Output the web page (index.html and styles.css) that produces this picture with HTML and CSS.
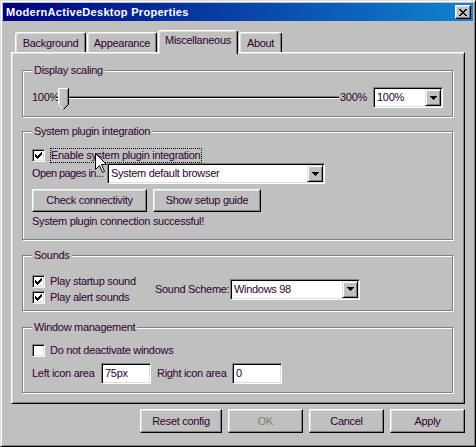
FILE: index.html
```html
<!DOCTYPE html>
<html>
<head>
<meta charset="utf-8">
<link rel="stylesheet" href="styles.css">
</head>
<body>
<div class="window">
  <div class="titlebar">
    <span class="title">ModernActiveDesktop Properties</span>
    <span class="close"><svg width="8" height="7" viewBox="0 0 8 7"><path d="M0 0h2v1H0zM6 0h2v1H6zM1 1h2v1H1zM5 1h2v1H5zM2 2h4v1H2zM3 3h2v1H3zM2 4h4v1H2zM1 5h2v1H1zM5 5h2v1H5zM0 6h2v1H0zM6 6h2v1H6z" fill="#000"/></svg></span>
  </div>
  <div class="tabs">
    <div class="tab t-bg">Background</div>
    <div class="tab t-ap">Appearance</div>
    <div class="tab active t-misc">Miscellaneous</div>
    <div class="tab t-about">About</div>
  </div>
  <div class="panel">
    <div class="group g1">
      <span class="legend">Display scaling</span>
      <div class="slider-row">
        <span class="w-100">100%</span>
        <div class="slider">
          <div class="track"></div>
          <svg class="thumb" width="11" height="22" viewBox="0 0 11 22">
            <path d="M0 0h11v16l-5 5.5L0 16z" fill="#c0c0c0"/>
            <path d="M0.5 16V0.5H10" fill="none" stroke="#fff"/>
            <path d="M1.5 16V1.5" fill="none" stroke="#dfdfdf"/>
            <path d="M10.5 0V16.5L5.5 21.5" fill="none" stroke="#000"/>
            <path d="M9.5 1.5V16L5.5 20" fill="none" stroke="#808080"/>
            <path d="M0.5 16.5L5 21" fill="none" stroke="#fff"/>
          </svg>
        </div>
        <span class="w-300">300%</span>
        <div class="combo c-scale"><span class="val">100%</span><span class="drop"><svg width="7" height="4" viewBox="0 0 7 4"><path d="M0 0h7v1H0zM1 1h5v1H1zM2 2h3v1H2zM3 3h1v1H3z" fill="#000"/></svg></span></div>
      </div>
    </div>

    <div class="group g2">
      <span class="legend">System plugin integration</span>
      <div class="check-row">
        <span class="box"><svg width="7" height="7" viewBox="0 0 7 7"><path d="M0 2h1v3H0zM1 3h1v3H1zM2 4h1v3H2zM3 3h1v3H3zM4 2h1v3H4zM5 1h1v3H5zM6 0h1v3H6z" fill="#000"/></svg></span>
        <span class="focus">Enable system plugin integration</span>
      </div>
      <div class="open-row">
        <span class="open-lbl">Open pages in...</span>
        <div class="combo c-browser"><span class="val">System default browser</span><span class="drop"><svg width="7" height="4" viewBox="0 0 7 4"><path d="M0 0h7v1H0zM1 1h5v1H1zM2 2h3v1H2zM3 3h1v1H3z" fill="#000"/></svg></span></div>
      </div>
      <div class="btn-row">
        <span class="btn b-check">Check connectivity</span>
        <span class="btn b-guide">Show setup guide</span>
      </div>
      <div class="status">System plugin connection successful!</div>
    </div>

    <div class="group g3">
      <span class="legend">Sounds</span>
      <div class="sound-row">
        <div class="sound-checks">
          <div class="sc-row">
            <span class="box"><svg width="7" height="7" viewBox="0 0 7 7"><path d="M0 2h1v3H0zM1 3h1v3H1zM2 4h1v3H2zM3 3h1v3H3zM4 2h1v3H4zM5 1h1v3H5zM6 0h1v3H6z" fill="#000"/></svg></span>
            <span class="cl">Play startup sound</span>
          </div>
          <div class="sc-row">
            <span class="box"><svg width="7" height="7" viewBox="0 0 7 7"><path d="M0 2h1v3H0zM1 3h1v3H1zM2 4h1v3H2zM3 3h1v3H3zM4 2h1v3H4zM5 1h1v3H5zM6 0h1v3H6z" fill="#000"/></svg></span>
            <span class="cl">Play alert sounds</span>
          </div>
        </div>
        <span class="scheme-lbl">Sound Scheme:</span>
        <div class="combo c-scheme"><span class="val">Windows 98</span><span class="drop"><svg width="7" height="4" viewBox="0 0 7 4"><path d="M0 0h7v1H0zM1 1h5v1H1zM2 2h3v1H2zM3 3h1v1H3z" fill="#000"/></svg></span></div>
      </div>
    </div>

    <div class="group g4">
      <span class="legend">Window management</span>
      <div class="sc-row wm-check">
        <span class="box"></span>
        <span class="cl">Do not deactivate windows</span>
      </div>
      <div class="icon-row">
        <span class="left-lbl">Left icon area</span>
        <span class="field">75px</span>
        <span class="right-lbl">Right icon area</span>
        <span class="field">0</span>
      </div>
    </div>
  </div>
  <div class="footer">
    <span class="btn b-reset">Reset config</span>
    <span class="btn b-std disabled">OK</span>
    <span class="btn b-std">Cancel</span>
    <span class="btn b-std">Apply</span>
  </div>
  <svg class="cursor" width="13" height="21" viewBox="0 0 13 21"><path d="M0.5 0.5V16.5L4.5 12.5L7.5 19.5L9.5 18.5L6.5 11.5H11.5Z" fill="#fff" stroke="#000" stroke-linejoin="miter"/></svg>
</div>
</body>
</html>
```
FILE: styles.css
```css
body {
  margin: 0;
  background: #c0c0c0;
  font-family: "Liberation Sans", Arial, sans-serif;
  font-size: 11px;
  line-height: 13px;
  letter-spacing: -0.3px;
  white-space: nowrap;
  color: #2e0030;
}

.window {
  position: relative;
  width: 476px;
  height: 447px;
  box-sizing: border-box;
  border: 1px solid;
  border-color: #dfdfdf #000 #000 #dfdfdf;
  box-shadow: inset 1px 1px #fff, inset -1px -1px #808080;
  padding: 2px;
  background: #c0c0c0;
}

.titlebar {
  height: 18px;
  display: flex;
  align-items: center;
  justify-content: space-between;
  padding: 0 2px 0 3px;
  background: linear-gradient(to right, #000080, #1084d0);
}

.title {
  color: #fff;
  font-weight: bold;
  font-size: 11px;
  letter-spacing: 0.3px;
}

.close {
  width: 16px;
  height: 14px;
  box-sizing: border-box;
  display: flex;
  align-items: center;
  justify-content: center;
  background: #c0c0c0;
  border: 1px solid;
  border-color: #fff #000 #000 #fff;
  box-shadow: inset -1px -1px #808080, inset 1px 1px #dfdfdf;
}

/* Tabs */
.tabs {
  display: flex;
  align-items: flex-start;
  height: 24px;
  margin: 9px 0 -2px 12px;
}

.tab {
  box-sizing: border-box;
  height: 20px;
  margin-top: 2px;
  border: 1px solid;
  border-bottom: none;
  border-color: #fff #000 #000 #fff;
  border-radius: 3px 3px 0 0;
  box-shadow: inset -1px 0 #808080, inset 1px 1px #dfdfdf;
  display: flex;
  align-items: center;
  justify-content: center;
  padding-top: 1px;
  background: #c0c0c0;
}

.t-bg { width: 71px; margin-right: 1px; }
.t-ap { width: 70px; margin-right: 1px; }
.t-misc { width: 80px; margin-right: 1px; }
.t-about { width: 43px; }

.tab.active {
  height: 24px;
  margin-top: 0;
  padding-top: 0;
  padding-bottom: 4px;
  position: relative;
  z-index: 2;
}

/* Panel */
.panel {
  position: relative;
  z-index: 1;
  margin-left: 8px;
  width: 454px;
  height: 352px;
  box-sizing: border-box;
  border: 1px solid;
  border-color: #fff #000 #000 #fff;
  box-shadow: inset 1px 1px #dfdfdf, inset -1px -1px #808080;
  padding: 17px 0 0 10px;
}

.group {
  position: relative;
  width: 431px;
  box-sizing: border-box;
  border: 1px solid #808080;
  box-shadow: 1px 1px 0 #fff, inset 1px 1px 0 #fff;
  padding: 0 9px;
}

.legend {
  position: absolute;
  top: -7px;
  left: 9px;
  padding: 0 2px;
  background: #c0c0c0;
}

.g1 { height: 47px; padding-top: 16px; }
.g2 { height: 109px; margin-top: 14px; padding-top: 16px; }
.g3 { height: 56px; margin-top: 15px; padding-top: 17px; }
.g4 { height: 66px; margin-top: 16px; padding-top: 16px; }

/* Slider */
.slider-row {
  display: flex;
  align-items: center;
  height: 21px;
}

.w-100 { width: 24px; }
.w-300 { width: 27px; margin-left: 1px; }

.slider {
  position: relative;
  flex: 1;
  height: 21px;
}

.track {
  position: absolute;
  left: 0;
  right: 0;
  top: 9px;
  height: 1px;
  background: #000;
  border-top: 1px solid #808080;
  border-bottom: 1px solid #fff;
}

.thumb {
  position: absolute;
  left: 2px;
  top: 1px;
}

/* Combo / fields */
.combo, .field {
  box-sizing: border-box;
  height: 21px;
  border: 1px solid;
  border-color: #808080 #fff #fff #808080;
  box-shadow: inset 1px 1px #000, inset -1px -1px #dfdfdf;
  background: #fff;
  padding: 1px;
  display: flex;
  align-items: center;
}

.combo .val {
  flex: 1;
  padding-left: 2px;
  overflow: hidden;
}

.drop {
  width: 16px;
  height: 17px;
  box-sizing: border-box;
  border: 1px solid;
  border-color: #dfdfdf #000 #000 #dfdfdf;
  box-shadow: inset 1px 1px #fff, inset -1px -1px #808080;
  background: #c0c0c0;
  display: flex;
  align-items: center;
  justify-content: center;
}

.c-scale { width: 70px; margin-left: 6px; flex: none; }
.c-browser { width: 218px; }
.c-scheme { width: 130px; }

.field {
  width: 50px;
  padding-left: 3px;
}

/* Checkboxes */
.box {
  box-sizing: border-box;
  width: 13px;
  height: 13px;
  flex: none;
  border: 1px solid;
  border-color: #808080 #fff #fff #808080;
  box-shadow: inset 1px 1px #000, inset -1px -1px #dfdfdf;
  background: #fff;
  display: flex;
  align-items: center;
  justify-content: center;
}

.check-row {
  display: flex;
  align-items: center;
  height: 15px;
}

.focus {
  margin-left: 5px;
  border: 1px dotted #000;
  padding: 0 1px 0 0;
  line-height: 13px;
}

.open-row {
  display: flex;
  align-items: center;
  height: 21px;
}

.open-lbl { width: 75px; letter-spacing: -0.6px; }

.btn-row {
  display: flex;
  gap: 6px;
  margin-top: 5px;
}

.btn {
  box-sizing: border-box;
  height: 23px;
  border: 1px solid;
  border-color: #fff #000 #000 #fff;
  box-shadow: inset -1px -1px #808080, inset 1px 1px #dfdfdf;
  display: flex;
  align-items: center;
  justify-content: center;
}

.b-check { width: 115px; }
.b-guide { width: 108px; }

.status { margin-top: 3px; }

/* Sounds */
.sound-row {
  display: flex;
  align-items: center;
}

.sound-checks { width: 123px; }

.sc-row {
  display: flex;
  align-items: center;
  height: 16px;
}

.sc-row .cl { margin-left: 5px; }

.scheme-lbl { width: 75px; }

/* Window management */
.wm-check { height: 13px; }

.icon-row {
  display: flex;
  align-items: center;
  margin-top: 6px;
}

.left-lbl { width: 69px; }
.right-lbl { width: 75px; margin-left: 6px; }

/* Footer */
.footer {
  display: flex;
  justify-content: flex-end;
  gap: 6px;
  margin: 5px 8px 0 0;
}

.footer .btn { height: 24px; }
.b-reset { width: 82px; }
.b-std { width: 75px; }
.disabled { color: #857c6c; }

.cursor {
  position: absolute;
  left: 94px;
  top: 152px;
  z-index: 5;
}
```
